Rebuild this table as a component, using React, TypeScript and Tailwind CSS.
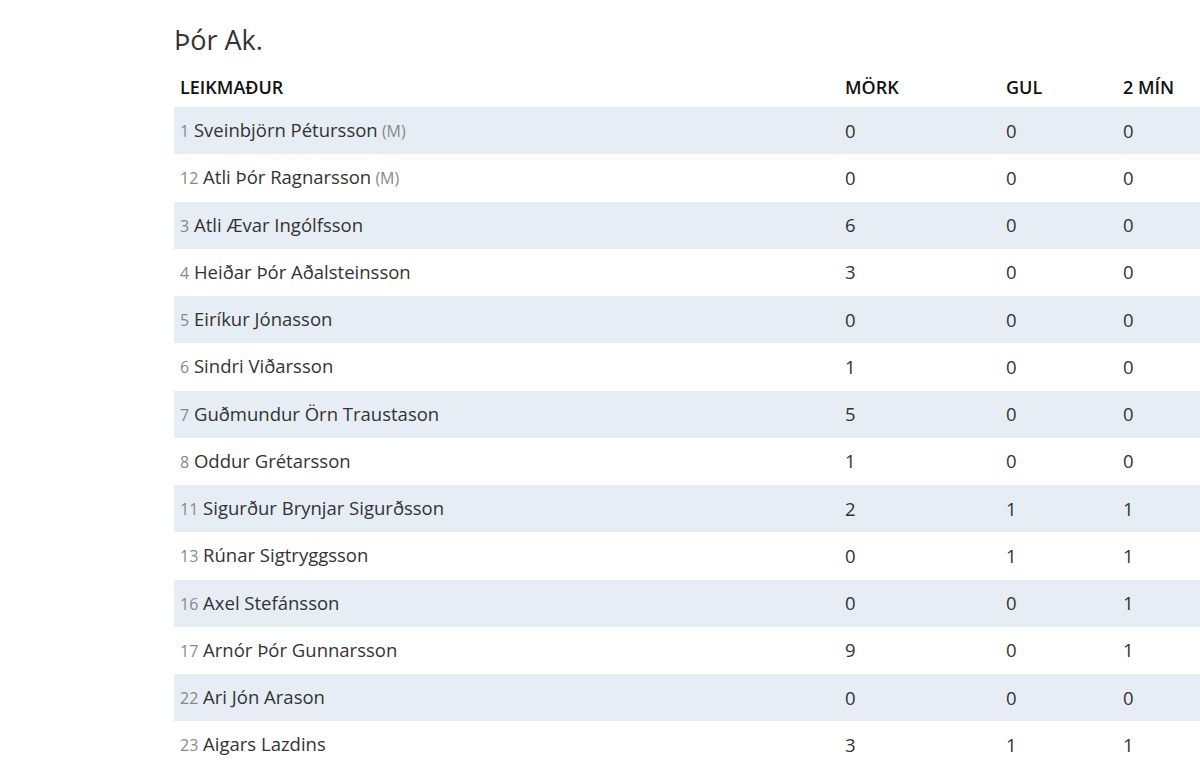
const players = [
  { nr: 1, name: 'Sveinbjörn Pétursson', gk: true, mork: 0, gul: 0, min: 0 },
  { nr: 12, name: 'Atli Þór Ragnarsson', gk: true, mork: 0, gul: 0, min: 0 },
  { nr: 3, name: 'Atli Ævar Ingólfsson', mork: 6, gul: 0, min: 0 },
  { nr: 4, name: 'Heiðar Þór Aðalsteinsson', mork: 3, gul: 0, min: 0 },
  { nr: 5, name: 'Eiríkur Jónasson', mork: 0, gul: 0, min: 0 },
  { nr: 6, name: 'Sindri Viðarsson', mork: 1, gul: 0, min: 0 },
  { nr: 7, name: 'Guðmundur Örn Traustason', mork: 5, gul: 0, min: 0 },
  { nr: 8, name: 'Oddur Grétarsson', mork: 1, gul: 0, min: 0 },
  { nr: 11, name: 'Sigurður Brynjar Sigurðsson', mork: 2, gul: 1, min: 1 },
  { nr: 13, name: 'Rúnar Sigtryggsson', mork: 0, gul: 1, min: 1 },
  { nr: 16, name: 'Axel Stefánsson', mork: 0, gul: 0, min: 1 },
  { nr: 17, name: 'Arnór Þór Gunnarsson', mork: 9, gul: 0, min: 1 },
  { nr: 22, name: 'Ari Jón Arason', mork: 0, gul: 0, min: 0 },
  { nr: 23, name: 'Aigars Lazdins', mork: 3, gul: 1, min: 1 },
]

export default function App() {
  return (
    <div
      className="w-full h-[772px] overflow-hidden bg-white text-[#333]"
      style={{ fontFamily: '"Open Sans", "Liberation Sans", sans-serif' }}
    >
      <div className="ml-[174px] w-[1060px]">
        <h2 className="mt-[22px] h-[36px] leading-[36px] text-[27px] font-normal text-[#333]">Þór Ak.</h2>
        <div className="grid grid-cols-[665px_161px_117px_1fr] h-[49px] items-end pb-[8px] text-[18px] leading-[24px] font-semibold text-[#111] uppercase">
          <div className="px-[6px]">Leikmaður</div>
          <div className="px-[6px]">Mörk</div>
          <div className="px-[6px]">Gul</div>
          <div className="px-[6px]">2 Mín</div>
        </div>
        {players.map((p, i) => (
          <div
            key={p.nr}
            className={`grid grid-cols-[665px_161px_117px_1fr] h-[47.25px] items-center text-[18.5px] leading-[24px] ${
              i % 2 === 0 ? 'bg-[#e6edf5]' : 'bg-white'
            }`}
          >
            <div className="px-[6px]">
              <span className="text-[16px] text-[#888]">{p.nr}</span> {p.name}
              {p.gk && <span className="text-[16px] text-[#888]"> (M)</span>}
            </div>
            <div className="px-[6px]">{p.mork}</div>
            <div className="px-[6px]">{p.gul}</div>
            <div className="px-[6px]">{p.min}</div>
          </div>
        ))}
      </div>
    </div>
  )
}
